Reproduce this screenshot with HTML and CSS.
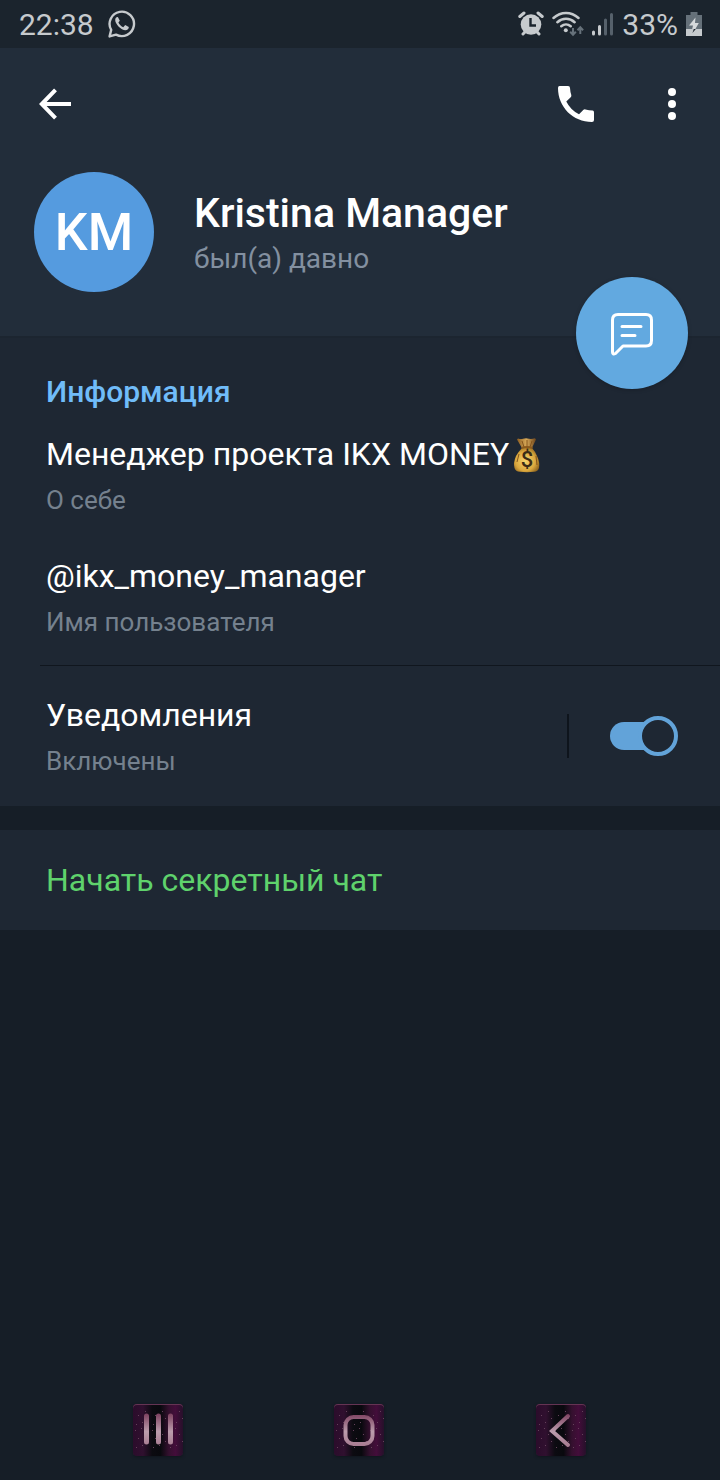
FILE: index.html
```html
<!DOCTYPE html>
<html lang="ru">
<head>
<meta charset="utf-8">
<meta name="viewport" content="width=device-width, initial-scale=1">
<title>Kristina Manager</title>
<link rel="stylesheet" href="styles.css">
</head>
<body>
<div class="status-bar">
  <div class="status-group status-left">
    <span>22:38</span>
    <svg class="icon-whatsapp" width="28" height="30" viewBox="0 0 28 30" fill="none" stroke="#c6cacd" aria-hidden="true">
      <path d="M1.600 27.400 3.200 20.900A12.200 12.200 0 1 1 8 25.600Z" stroke-width="2.400" stroke-linejoin="round"/>
      <path d="M10 8.200c-1.200-.5-2.800.8-2.800 2.800 0 4.200 6 10.200 10.200 10.200 2 0 3.600-1.600 3.400-3.200l-3.600-1.900-1.900 2.100c-2.200-.9-3.900-2.600-4.900-4.700l1.400-1.700Z" fill="#c6cacd" stroke="none"/>
    </svg>
  </div>
  <div class="status-group status-right">
    <svg width="26" height="26" viewBox="0 0 26 26" aria-hidden="true">
      <g stroke="#c6cacd" stroke-width="3" stroke-linecap="round">
        <path d="M1.800 5.500 6 2M24.200 5.500 20 2M5 23l3-3M21 23l-3-3" fill="none"/>
      </g>
      <circle cx="13" cy="13.500" r="10.300" fill="#c6cacd"/>
      <path d="M12.500 7v7.500H18" fill="none" stroke="#1b242d" stroke-width="2.400"/>
    </svg>
    <svg class="icon-wifi" width="32" height="26" viewBox="0 0 32 26" fill="none" aria-hidden="true">
      <g stroke="#c6cacd" stroke-width="2.500" stroke-linecap="round">
        <path d="M1.500 7C9 .2 19 .2 26.500 7M5.400 11.200c5-4.500 12.200-4.500 17.200 0M9.300 15.200c2.800-2.400 6.600-2.400 9.400 0"/>
      </g>
      <circle cx="13.800" cy="19.200" r="2" fill="#c6cacd"/>
      <path d="M21 17v6.500M18.200 20.800l2.800 3 2.800-3M28.300 23v-6.500M25.500 19.200l2.800-3 2.800 3" stroke="#66717a" stroke-width="2"/>
    </svg>
    <svg class="icon-signal" width="22" height="24" viewBox="0 0 22 24" stroke-width="3" stroke-linecap="round" aria-hidden="true">
      <path d="M1.500 20v2M7.500 14.500v7.500" stroke="#c6cacd"/>
      <path d="M13.500 8v14M19.500 2.500v19.500" stroke="#56616b"/>
    </svg>
    <span>33%</span>
    <svg class="icon-battery" width="16" height="24" viewBox="0 0 16 24" aria-hidden="true">
      <path d="M4.500 0h7v3H16v14H0V3h4.500Z" fill="#66717a"/>
      <path d="M0 17h16v7H0Z" fill="#c6cacd"/>
      <path d="M7.800 17h2L6.400 21Z" fill="#1b242d"/>
      <path d="M9.500 5.500 3 13.500h4L6.200 17h3.200l3.400-6H9Z" fill="#d6d9db"/>
    </svg>
  </div>
</div>

<header class="profile-header">
  <div class="toolbar">
    <button class="icon-button" type="button" aria-label="Назад">
      <svg width="34" height="32" viewBox="0 0 34 32" fill="none" stroke="#fff" stroke-width="4" aria-hidden="true"><path d="M16.500 1.800 2.800 16l13.700 14.200M2.800 16H32"/></svg>
    </button>
    <button class="icon-button call-button" type="button" aria-label="Позвонить">
      <svg width="38" height="38" viewBox="0 0 38 38" fill="#fff" aria-hidden="true"><path d="M2.500 1H11q2 0 2 2 .2 3.700 1.300 7 .3 1.200-.6 2.200L9.300 16.500Q13.500 25 22 29.300L26.500 24.800q.8-.8 2-.4 3.500 1.100 7.200 1.200 1.300 0 1.300 1.800V35q0 2-2 2C16 37 1 22 1 3Q1 1 2.500 1Z"/></svg>
    </button>
    <button class="icon-button" type="button" aria-label="Ещё">
      <svg width="8" height="34" viewBox="0 0 8 34" fill="#fff" aria-hidden="true"><circle cx="4" cy="5" r="4"/><circle cx="4" cy="17" r="4"/><circle cx="4" cy="29" r="4"/></svg>
    </button>
  </div>
  <div class="identity">
    <div class="avatar">KM</div>
    <div class="identity-text">
      <h1 class="name">Kristina Manager</h1>
      <p class="presence">был(а) давно</p>
    </div>
  </div>
  <button class="message-button" type="button" aria-label="Написать сообщение">
    <svg width="44" height="46" viewBox="0 -2 44 46" fill="none" stroke="#fff" stroke-width="3" stroke-linecap="round" stroke-linejoin="round" aria-hidden="true">
      <path d="M8 2.500H36q5.500 0 5.500 5.500V28.500q0 5.500-5.500 5.500H13L5.500 41.500q-3 1.500-3-1.500V8Q2.500 2.500 8 2.500Z"/>
      <path d="M12 14.500H31M12 23.500H25"/>
    </svg>
  </button>
</header>

<main>
  <section class="info">
    <h2 class="section-title">Информация</h2>
    <div class="entry">
      <p class="value">Менеджер проекта IKX MONEY<svg class="money-bag" width="30" height="36" viewBox="0 0 30 36" role="img" aria-label="Мешок денег">
        <defs>
          <radialGradient id="bag" cx=".45" cy=".55" r=".6"><stop offset="0" stop-color="#f8d56c"/><stop offset=".65" stop-color="#dba83e"/><stop offset="1" stop-color="#8c621d"/></radialGradient>
          <linearGradient id="neck"><stop offset="0" stop-color="#8c5c20"/><stop offset=".5" stop-color="#d8a958"/><stop offset="1" stop-color="#6b431b"/></linearGradient>
        </defs>
        <path d="M6 1.500q3 1 5 .3 3-1.300 6 0 3 .4 6-.5l1 1.200-4.500 9.500h-9L5 2.500Z" fill="url(#neck)"/>
        <path d="M10 11q5-1.500 10 0 3 3 5.500 9 2.500 6 1.500 11-1 3.500-5 3.800-7 .8-14 0Q3.500 34.500 2.500 31 1 26 4 19q3-5 6-8Z" fill="url(#bag)"/>
        <path d="M10 4l2 6M15 3v7M20 4l-2 6M7 17l-2 8M24 19l1 9" stroke="#85551c" fill="none"/>
        <path d="M9.500 11q5.500-1.800 11 0" stroke="#8b5a1d" stroke-width="2" fill="none"/>
        <text class="bag-sign" x="15" y="30" text-anchor="middle">$</text>
      </svg></p>
      <p class="caption">О себе</p>
    </div>
    <div class="entry">
      <p class="value">@ikx_money_manager</p>
      <p class="caption">Имя пользователя</p>
    </div>
  </section>

  <label class="notifications">
    <span class="notifications-text">
      <span class="value">Уведомления</span>
      <span class="caption">Включены</span>
    </span>
    <span class="switch-area"><input class="switch" type="checkbox" role="switch" checked></span>
  </label>

  <button class="secret-chat" type="button">Начать секретный чат</button>
</main>

<nav class="system-nav">
  <button class="nav-key" type="button" aria-label="Последние приложения">
    <svg width="50" height="52" viewBox="0 0 50 52" fill="none" stroke-width="5" stroke-linecap="round" aria-hidden="true">
      <defs>
        <linearGradient id="metal" gradientUnits="userSpaceOnUse" x1="0" y1="10" x2="0" y2="42"><stop offset="0" stop-color="#7e4361"/><stop offset=".55" stop-color="#bb9cac"/><stop offset="1" stop-color="#a77b91"/></linearGradient>
        <pattern id="glitter" width="17" height="23" patternUnits="userSpaceOnUse"><path d="M2 3h1v1h-1zM8 1h1v1h-1zM12 7h1v1h-1zM5 11h1v1h-1zM15 14h1v1h-1zM9 18h1v1h-1zM3 20h1v1h-1z" fill="#64405a"/></pattern>
      </defs>
      <path d="M0 4h50v42H0Z" fill="url(#glitter)"/>
      <path d="M13.500 12v26M25.500 12v26M37.500 12v26" stroke="url(#metal)"/>
    </svg>
  </button>
  <button class="nav-key" type="button" aria-label="Главный экран">
    <svg width="50" height="52" viewBox="0 0 50 52" fill="none" stroke-width="4" aria-hidden="true">
      <path d="M0 4h50v42H0Z" fill="url(#glitter)"/>
      <rect x="11.500" y="13" width="27" height="27" rx="8" stroke="url(#metal)"/>
    </svg>
  </button>
  <button class="nav-key" type="button" aria-label="Назад">
    <svg width="50" height="52" viewBox="0 0 50 52" fill="none" stroke-width="4" stroke-linecap="round" aria-hidden="true">
      <path d="M0 4h50v42H0Z" fill="url(#glitter)"/>
      <path d="M32 12 16 27l16 14" stroke="url(#metal)"/>
    </svg>
  </button>
</nav>
</body>
</html>
```

FILE: styles.css
```css
* {
  box-sizing: border-box;
}

body {
  margin: 0;
  min-height: 100vh;
  display: flex;
  flex-direction: column;
  background: #161e27;
  color: #fff;
  font-family: Roboto, "Liberation Sans", sans-serif;
}

h1, h2, p {
  margin: 0;
}

button {
  margin: 0;
  padding: 0;
  border: 0;
  background: none;
  color: inherit;
  font: inherit;
  cursor: pointer;
}

svg {
  display: block;
  flex: none;
}

.status-bar {
  display: flex;
  justify-content: space-between;
  align-items: center;
  height: 48px;
  padding: 0 18px 0 19px;
  background: #1b242d;
  color: #c6cacd;
  font-size: 30px;
}

.status-group {
  display: flex;
  align-items: center;
}

.status-left {
  gap: 14px;
}

.status-right {
  gap: 8px;
}

.profile-header {
  position: relative;
  height: 290px;
  background: #222d3a;
  border-bottom: 2px solid #1c2530;
}

.toolbar {
  display: flex;
  align-items: center;
  height: 112px;
  padding: 0 16px 0 24px;
}

.icon-button {
  display: grid;
  place-items: center;
  width: 64px;
  height: 64px;
}

.call-button {
  margin-left: auto;
  margin-right: 32px;
}

.identity {
  display: flex;
  align-items: center;
  gap: 40px;
  padding: 12px 34px;
}

.identity-text {
  padding-top: 6px;
}

.avatar {
  display: grid;
  place-items: center;
  width: 120px;
  height: 120px;
  border-radius: 50%;
  background: #559bdf;
  font-size: 52px;
  font-weight: 500;
}

.name {
  font-size: 41px;
  font-weight: 500;
  line-height: 48px;
}

.presence {
  color: #8390a0;
  font-size: 28px;
  line-height: 44px;
}

.message-button {
  position: absolute;
  right: 32px;
  bottom: -53px;
  display: grid;
  place-items: center;
  width: 112px;
  height: 112px;
  border-radius: 50%;
  background: #62a9e0;
  box-shadow: 0 1px 4px rgba(0, 0, 0, 0.2);
}

.info,
.notifications,
.secret-chat {
  background: #1e2733;
}

.info {
  padding: 32px 0 0 46px;
  background: linear-gradient(#10161e, #10161e) right bottom / calc(100% - 40px) 1px no-repeat #1e2733;
}

.section-title {
  color: #70bcf9;
  font-size: 30px;
  font-weight: 500;
  line-height: 44px;
}

.entry {
  padding-bottom: 30px;
}

.section-title + .entry {
  padding-top: 16px;
}

.entry:last-child {
  padding-bottom: 22px;
}

.value {
  display: flex;
  align-items: center;
  font-size: 32px;
  line-height: 48px;
}

.caption {
  display: block;
  color: #75818e;
  font-size: 26px;
  line-height: 44px;
}

.money-bag {
  margin: 2px 0 0 3px;
}

.bag-sign {
  fill: #3b2c16;
  font-size: 22px;
  font-weight: 500;
}

.notifications {
  display: flex;
  align-items: center;
  justify-content: space-between;
  height: 140px;
  padding: 0 42px 0 46px;
  cursor: pointer;
}

.notifications-text {
  padding-top: 2px;
}

.switch-area {
  display: flex;
  align-items: center;
  height: 44px;
  padding-left: 41px;
  border-left: 2px solid #0e141c;
}

.switch {
  appearance: none;
  position: relative;
  width: 68px;
  height: 40px;
  margin: 0;
  cursor: pointer;
}

.switch::before {
  content: "";
  position: absolute;
  inset: 6px 12px 6px 0;
  border-radius: 14px;
  background: #62a3d9;
}

.switch::after {
  content: "";
  position: absolute;
  right: 0;
  top: 0;
  box-sizing: border-box;
  width: 40px;
  height: 40px;
  border: 4px solid #62a3d9;
  border-radius: 50%;
  background: #1e2733;
}

.secret-chat {
  display: block;
  width: 100%;
  height: 100px;
  margin-top: 24px;
  padding: 0 46px;
  color: #5fd26c;
  font-size: 32px;
  text-align: left;
}

.system-nav {
  display: flex;
  justify-content: space-around;
  margin-top: auto;
  padding: 20px 58px 24px 57px;
}

.nav-key {
  width: 50px;
  height: 52px;
  border-radius: 4px;
  background: linear-gradient(90deg, #2b0c2b, #30102f 20%, #0c0b11 38%, #09090e 55%, #35102f 72%, #430d3a 85%, #26102a);
  box-shadow: inset 0 1px #653453, 0 1px 3px #10151d;
  overflow: hidden;
}
```
